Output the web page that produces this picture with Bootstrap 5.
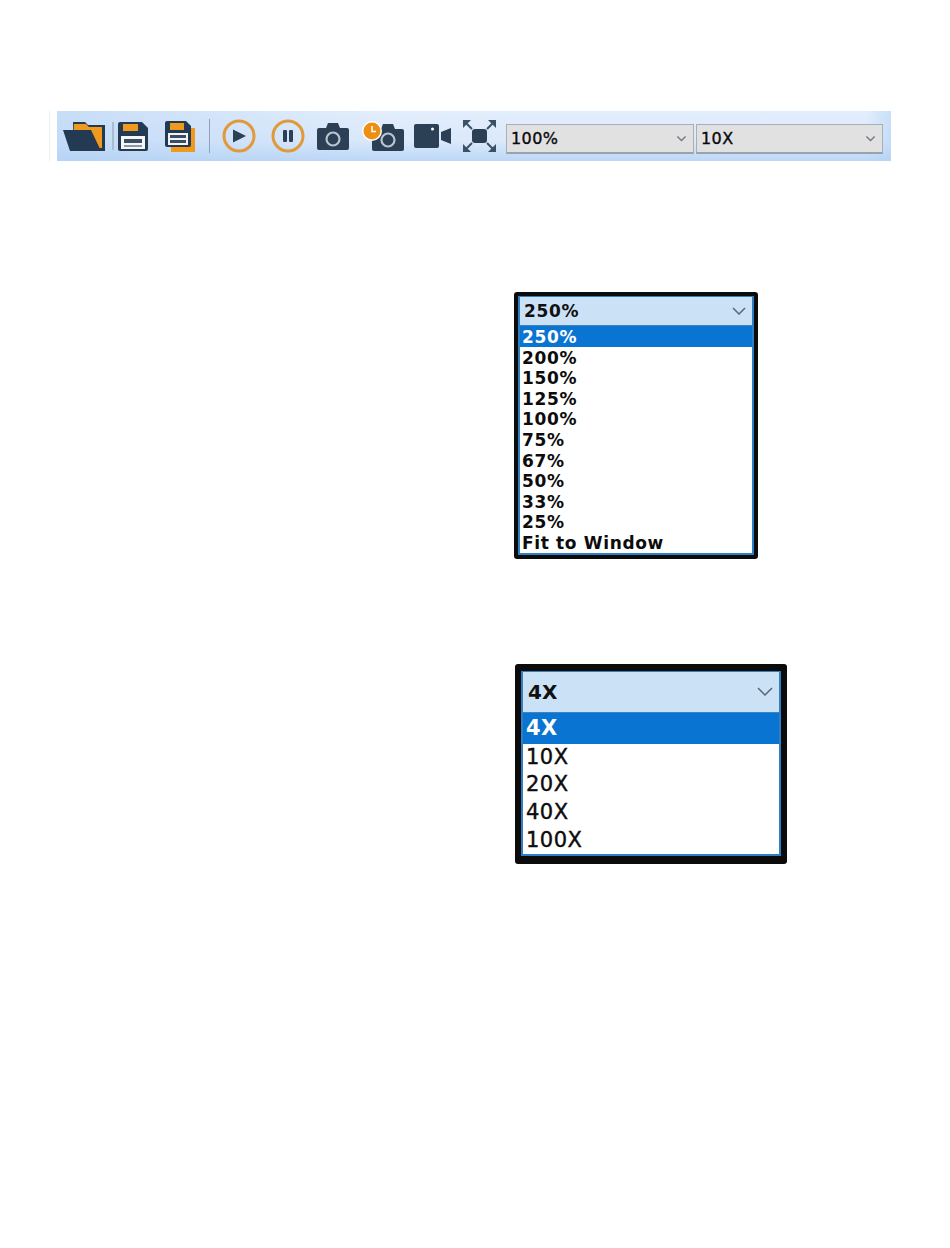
<!doctype html>
<html lang="en">
<head>
<meta charset="utf-8">
<title>Toolbar</title>
<link href="https://cdn.jsdelivr.net/npm/bootstrap@5.3.0/dist/css/bootstrap.min.css" rel="stylesheet">
<style>
body{background:#fff;margin:0;font-family:"DejaVu Sans",sans-serif;color:#111}
.bar-wrap{margin:111px 59px 0 49px;padding-left:7px;border-left:1px solid #eceef0}
.tool-bar{height:50px;background:linear-gradient(90deg,rgba(176,208,244,.55) 0%,rgba(176,208,244,0) 40%,rgba(176,208,244,0) 97%,rgba(176,208,244,.5) 100%),linear-gradient(180deg,#e3eefc 0%,#dbe9fb 60%,#bcd7f6 100%);padding-left:5px}
.tool-bar svg{flex:none;display:block}
.sep-a{width:2px;height:28px;background:#a9bdd2;margin-left:6px;flex:none}
.sep-b{width:1px;height:34px;background:#8fa3b8;margin-left:14px;flex:none}
.m4{margin-left:4px}.m17{margin-left:17px}.m12{margin-left:12px}.m15{margin-left:15px}.m9{margin-left:9px}.m11{margin-left:11px}
.zoom-pick{width:188px;height:30px;margin:6px 0 0 10px;flex:none}
.mag-pick{width:187px;height:30px;margin:6px 0 0 2px;flex:none}
.tool-bar .form-select{background-color:#e1e1e1;border:1px solid #a9afb6;border-bottom:2px solid #9aa3ad;border-radius:0;color:#0a0a0a;font-family:"DejaVu Sans",sans-serif;font-size:16px;letter-spacing:.4px;-webkit-text-stroke:.35px #0a0a0a;line-height:27px;height:30px;padding:0 20px 0 4px;box-shadow:none;
 background-image:url("data:image/svg+xml,%3csvg xmlns='http://www.w3.org/2000/svg' viewBox='0 0 16 16'%3e%3cpath fill='none' stroke='%23778' stroke-width='2' d='M2 5l6 6 6-6'/%3e%3c/svg%3e");background-size:11px 11px;background-position:right 6px center}
.shot-one{width:244px;margin:131px 0 0 514px;border:4px solid #0b0b0b;border-radius:3px;background:#fff}
.shot-two{width:272px;margin:105px 0 0 515px;border:6px solid #0b0b0b;border-top-width:7px;border-bottom-width:8px;border-radius:3px;background:#fff}
.shot-in{border:2px solid #2f7fc4;border-top-width:1px}
.pick-head{background:#cbe2f6;border-bottom:1px solid #3d83bf;font-weight:700}
.shot-one .pick-head{height:29px;font-size:17px;letter-spacing:.7px;line-height:28px;padding:0 6px 0 4px}
.shot-two .pick-head{height:41px;font-size:20px;line-height:40px;padding:0 6px 0 5px}
.pick-list .list-group-item{border:0;border-radius:0;padding:0;background:#fff;color:#0c0c0c;white-space:nowrap}
.pick-list .list-group-item.active{background:#0a74d3;color:#fff}
.shot-one .list-group-item{height:20.6px;font-size:17px;line-height:22.6px;font-weight:700;letter-spacing:.65px;padding-left:2px}
.shot-two .list-group-item{height:27.7px;font-size:21px;line-height:27.7px;letter-spacing:.5px;-webkit-text-stroke:.4px #0c0c0c;padding-left:3px}
.shot-two .list-group-item.active{height:31px;line-height:31px;font-weight:700;-webkit-text-stroke:0}
</style>
</head>
<body>
<div class="bar-wrap">
  <div class="tool-bar d-flex align-items-center">
    <svg width="44" height="29" viewBox="0 0 44 29"><path fill="#243a52" d="M11 0h12l3 3h17v26H12z"/><path fill="#ef9a1f" d="M12 2h12l3 3h13v21h-3L29 9H12z"/><path fill="#243a52" d="M1 8h28l10 21H8z"/></svg>
    <div class="sep-a"></div>
    <svg class="m4" width="30" height="29" viewBox="0 0 30 29"><path fill="#243a52" d="M2 0h22l6 6v21a2 2 0 0 1-2 2H2a2 2 0 0 1-2-2V2a2 2 0 0 1 2-2z"/><rect x="5" y="2" width="15" height="7" fill="#ef9a1f"/><rect x="3" y="14" width="24" height="13" fill="#f4f6f8"/><rect x="6" y="17" width="18" height="4" fill="#3b4f64"/><rect x="6" y="23" width="18" height="2" fill="#8a98a6"/></svg>
    <svg class="m17" width="30" height="31" viewBox="0 0 30 31"><rect x="6" y="7" width="24" height="24" fill="#ef9a1f"/><path fill="#243a52" d="M2 0h19l5 5v19a2 2 0 0 1-2 2H2a2 2 0 0 1-2-2V2a2 2 0 0 1 2-2z"/><rect x="5" y="2" width="14" height="7" fill="#ef9a1f"/><rect x="3" y="12" width="20" height="12" fill="#f1f3f5"/><rect x="5" y="14" width="16" height="3" fill="#3b4f64"/><rect x="5" y="19" width="16" height="3" fill="#3b4f64"/></svg>
    <div class="sep-b"></div>
    <svg class="m12" width="34" height="34" viewBox="0 0 34 34"><circle cx="17" cy="17" r="15" fill="none" stroke="#e09a3a" stroke-width="3"/><path fill="#2b3f55" d="M11 10.500l13 6.500-13 6.500z"/></svg>
    <svg class="m15" width="34" height="34" viewBox="0 0 34 34"><circle cx="17" cy="17" r="15" fill="none" stroke="#e09a3a" stroke-width="3"/><rect x="12" y="11" width="4" height="12" rx="1" fill="#2b3f55"/><rect x="18" y="11" width="4" height="12" rx="1" fill="#2b3f55"/></svg>
    <svg class="m12" width="32" height="27" viewBox="0 0 32 27"><path fill="#2b3f55" d="M2 5h7l2-5h10l2 5h7a2 2 0 0 1 2 2v18a2 2 0 0 1-2 2H2a2 2 0 0 1-2-2V7a2 2 0 0 1 2-2z"/><circle cx="16" cy="16" r="6.500" fill="none" stroke="#b9c4cf" stroke-width="2.200"/></svg>
    <svg class="m12" width="44" height="30" viewBox="0 0 44 30"><path fill="#2b3f55" d="M13 8h7l2-5h10l2 5h7a2 2 0 0 1 2 2v18a2 2 0 0 1-2 2H13a2 2 0 0 1-2-2V10a2 2 0 0 1 2-2z"/><circle cx="27" cy="19" r="6.500" fill="none" stroke="#b9c4cf" stroke-width="2.200"/><circle cx="11" cy="10" r="10" fill="#fff"/><circle cx="11" cy="10" r="8.500" fill="#ee8f14"/><path fill="none" stroke="#fff" stroke-width="1.500" d="M11 5v5.500h4"/></svg>
    <svg class="m9" width="38" height="24" viewBox="0 0 38 24"><rect width="25" height="24" rx="2" fill="#2b3f55"/><circle cx="18.500" cy="5" r="1.500" fill="#fff"/><path fill="#2b3f55" d="M27 8l10-4v16l-10-4z"/></svg>
    <svg class="m11" width="33" height="32" viewBox="0 0 33 32"><rect x="9" y="9" width="15" height="14" rx="3" fill="#2b3f55"/><path fill="#3d5166" d="M0 0h8L0 8zM33 0h-8l8 8zM0 32h8l-8-8zM33 32h-8l8-8z"/><path fill="none" stroke="#3d5166" stroke-width="2" d="M3 3l6 6M30 3l-6 6M3 29l6-6M30 29l-6-6"/></svg>
    <div class="zoom-pick"><select class="form-select" aria-label="Zoom"><option>100%</option></select></div>
    <div class="mag-pick"><select class="form-select" aria-label="Magnification"><option>10X</option></select></div>
  </div>
</div>

<div class="shot-one">
  <div class="shot-in">
    <div class="pick-head d-flex justify-content-between align-items-center"><span>250%</span><svg width="14" height="8" viewBox="0 0 14 8"><path fill="none" stroke="#5b6773" stroke-width="1.500" d="M1 1l6 6 6-6"/></svg></div>
    <div class="list-group pick-list">
      <div class="list-group-item active">250%</div>
      <div class="list-group-item">200%</div>
      <div class="list-group-item">150%</div>
      <div class="list-group-item">125%</div>
      <div class="list-group-item">100%</div>
      <div class="list-group-item">75%</div>
      <div class="list-group-item">67%</div>
      <div class="list-group-item">50%</div>
      <div class="list-group-item">33%</div>
      <div class="list-group-item">25%</div>
      <div class="list-group-item">Fit to Window</div>
    </div>
  </div>
</div>

<div class="shot-two">
  <div class="shot-in">
    <div class="pick-head d-flex justify-content-between align-items-center"><span>4X</span><svg width="16" height="9" viewBox="0 0 16 9"><path fill="none" stroke="#5b6773" stroke-width="1.500" d="M1 1l7 7 7-7"/></svg></div>
    <div class="list-group pick-list">
      <div class="list-group-item active">4X</div>
      <div class="list-group-item">10X</div>
      <div class="list-group-item">20X</div>
      <div class="list-group-item">40X</div>
      <div class="list-group-item">100X</div>
    </div>
  </div>
</div>
<script src="https://cdn.jsdelivr.net/npm/bootstrap@5.3.0/dist/js/bootstrap.bundle.min.js"></script>
</body>
</html>
